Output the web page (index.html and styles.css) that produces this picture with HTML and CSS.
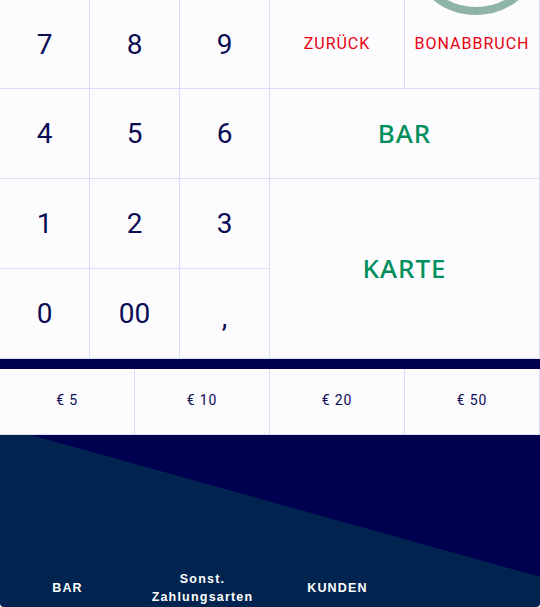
FILE: index.html
```html
<!DOCTYPE html>
<html lang="de">
<head>
<meta charset="utf-8">
<title>Kasse</title>
<link rel="stylesheet" href="styles.css">
</head>
<body>
<div class="app">
  <div class="keypad">
    <button class="key num">7</button>
    <button class="key num">8</button>
    <button class="key num">9</button>
    <button class="key action red">ZURÜCK</button>
    <button class="key action red">BONABBRUCH</button>
    <button class="key num">4</button>
    <button class="key num">5</button>
    <button class="key num">6</button>
    <button class="key pay green span2">BAR</button>
    <button class="key num">1</button>
    <button class="key num">2</button>
    <button class="key num">3</button>
    <button class="key pay green span2 tall">KARTE</button>
    <button class="key num">0</button>
    <button class="key num">00</button>
    <button class="key num comma">,</button>
  </div>
  <div class="divider"></div>
  <div class="cash">
    <button class="cash-key">€ 5</button>
    <button class="cash-key">€ 10</button>
    <button class="cash-key">€ 20</button>
    <button class="cash-key">€ 50</button>
  </div>
  <div class="bottom">
    <nav class="tabs">
      <span class="tab">BAR</span>
      <span class="tab">Sonst.<br>Zahlungsarten</span>
      <span class="tab">KUNDEN</span>
      <span class="tab"></span>
    </nav>
  </div>
  <div class="spinner"></div>
</div>
</body>
</html>
```

FILE: styles.css
```css
* { box-sizing: border-box; }
html, body { margin: 0; padding: 0; background: #ffffff; }
.app {
  position: relative;
  width: 540px;
  height: 607px;
  overflow: hidden;
  display: flex;
  flex-direction: column;
  font-family: "Noto Sans", "DejaVu Sans", sans-serif;
}
.keypad {
  display: grid;
  grid-template-columns: 90px 90px 90px 135px 135px;
  grid-template-rows: 89px 90px 90px 90px;
  background: #fcfcff;
}
.key {
  border: 0;
  border-right: 1px solid #dcdcf8;
  border-bottom: 1px solid #dcdcf8;
  background: #fcfcff;
  margin: 0;
  padding: 0;
  display: flex;
  align-items: center;
  justify-content: center;
  font-family: inherit;
}
.num {
  font-family: "Roboto", sans-serif;
  font-size: 28px;
  color: #0c0c55;
  font-weight: 400;
}
.comma { padding-top: 8px; }
.action {
  font-family: "Roboto", sans-serif;
  font-weight: 400;
  font-size: 16px;
  letter-spacing: 1px;
  padding-bottom: 2px;
}
.red { color: #e8000f; }
.green { color: #008f5c; }
.pay {
  font-size: 26px;
  font-weight: 500;
  letter-spacing: 1px;
  padding-bottom: 2px;
}
.span2 { grid-column: span 2; }
.tall { grid-row: span 2; }
.divider {
  height: 10px;
  background: #000050;
}
.cash {
  display: grid;
  grid-template-columns: repeat(4, 135px);
  height: 66px;
  background: #fcfcff;
}
.cash-key {
  border: 0;
  border-right: 1px solid #dcdcf8;
  border-bottom: 1px solid #dcdcf8;
  background: #fcfcff;
  margin: 0;
  padding: 0 0 4px;
  font-family: "Roboto", sans-serif;
  font-size: 14px;
  letter-spacing: 0.8px;
  color: #0c0c55;
}
.bottom {
  flex: 1;
  display: flex;
  flex-direction: column;
  justify-content: flex-end;
  background: linear-gradient(15.57deg, #00244f 0, #00244f 174px, #000050 174px, #000050 100%);
  border-radius: 0 0 4px 4px;
}
.tabs {
  display: grid;
  grid-template-columns: repeat(4, 135px);
  height: 38px;
  align-items: center;
}
.tab {
  color: #ffffff;
  font-family: "Liberation Sans", sans-serif;
  font-weight: 700;
  font-size: 12.5px;
  letter-spacing: 1.2px;
  line-height: 18px;
  text-align: center;
}
.spinner {
  position: absolute;
  left: 408px;
  top: -121px;
  width: 136px;
  height: 136px;
  border-radius: 50%;
  border: 8px solid #8fb3a8;
}
```
